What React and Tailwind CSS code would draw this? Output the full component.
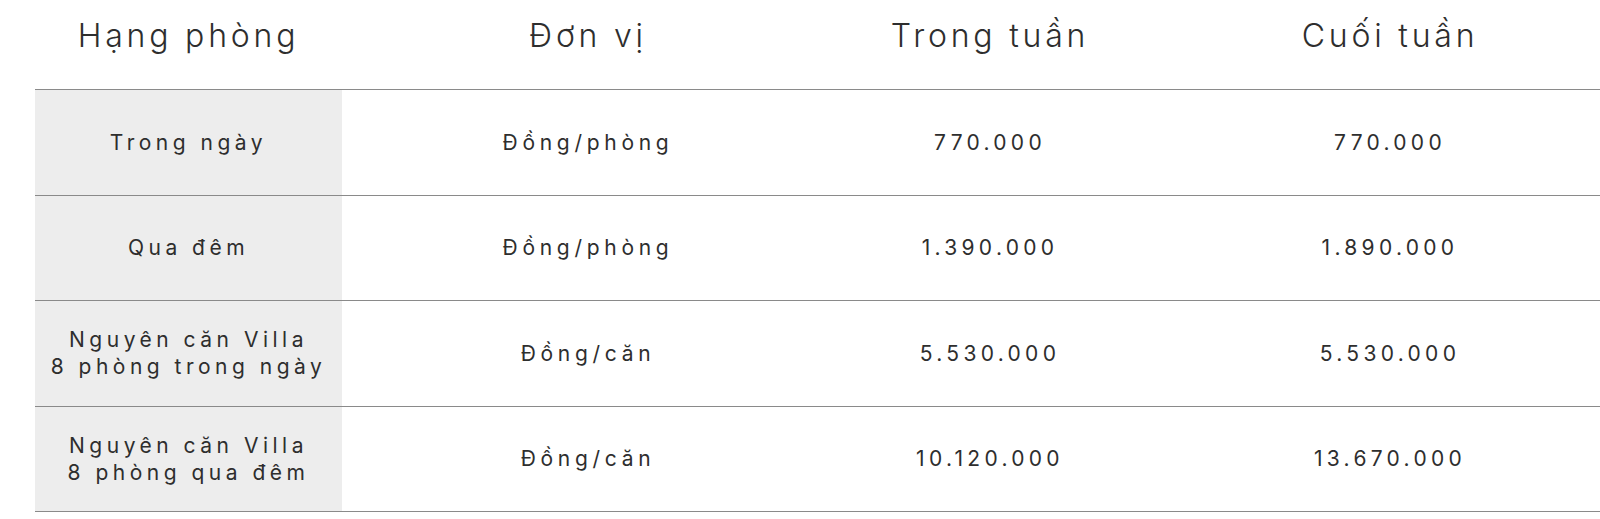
import React from 'react';

const headers = ['Hạng phòng', 'Đơn vị', 'Trong tuần', 'Cuối tuần'];

const rows = [
  { name: ['Trong ngày'], unit: 'Đồng/phòng', weekday: '770.000', weekend: '770.000' },
  { name: ['Qua đêm'], unit: 'Đồng/phòng', weekday: '1.390.000', weekend: '1.890.000' },
  { name: ['Nguyên căn Villa', '8 phòng trong ngày'], unit: 'Đồng/căn', weekday: '5.530.000', weekend: '5.530.000' },
  { name: ['Nguyên căn Villa', '8 phòng qua đêm'], unit: 'Đồng/căn', weekday: '10.120.000', weekend: '13.670.000' },
];

const cols = 'grid grid-cols-[307px_492px_312px_488px]';

export default function App() {
  return (
    <div className="w-full h-[519px] overflow-hidden bg-white text-[#2e2e2e] font-['Inter','Liberation_Sans',sans-serif]">
      <div className="ml-[35px] w-[1599px]">
        <div className={`${cols} h-[89px]`}>
          {headers.map((h) => (
            <div key={h} className="flex items-center justify-center pb-[17px] text-[32px] font-light leading-none tracking-[3.8px]">
              {h}
            </div>
          ))}
        </div>
        {rows.map((r, i) => (
          <div key={i} className={`${cols} h-[105.5px] border-t border-[#8a8a8a]`}>
            <div className="flex flex-col items-center justify-center bg-[#ededed] text-[21px] leading-[27px] tracking-[4.5px]">
              {r.name.map((line) => (
                <span key={line}>{line}</span>
              ))}
            </div>
            <div className="flex items-center justify-center text-[21px] tracking-[4.7px]">{r.unit}</div>
            <div className="flex items-center justify-center text-[21px] tracking-[4.3px]">{r.weekday}</div>
            <div className="flex items-center justify-center text-[21px] tracking-[4.3px]">{r.weekend}</div>
          </div>
        ))}
        <div className="border-t border-[#8a8a8a]" />
      </div>
    </div>
  );
}
